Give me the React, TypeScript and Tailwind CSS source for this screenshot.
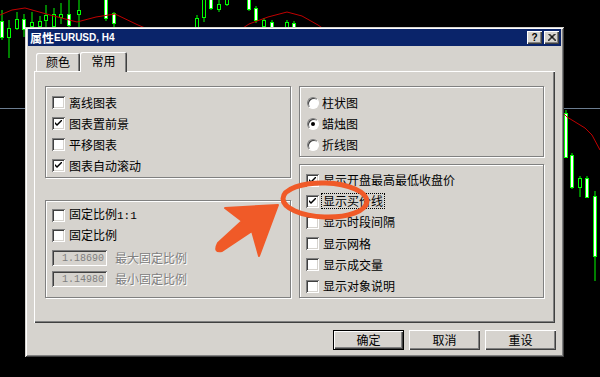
import type { ReactNode } from 'react'

type Candle = [number, number, number, number, number, boolean]

// x, bodyTop, bodyBottom, wickTop, wickBottom, white body
const candles: Candle[] = [
  [0, 21, 37, 10, 40, true],
  [7, 28, 37, 20, 58, false],
  [15, 19, 28, 12, 30, false],
  [22, 19, 29, 14, 37, true],
  [30, 22, 26, 12, 28, false],
  [38, 21, 26, 16, 27, false],
  [44, 15, 20, 5, 27, false],
  [52, 14, 26, 8, 28, false],
  [59, 14, 17, 3, 24, false],
  [67, 14, 25, 0, 27, true],
  [77, 10, 14, 0, 27, false],
  [104, -2, 18, -2, 21, true],
  [112, 13, 23, 12, 27, true],
  [195, 18, 27, 15, 30, false],
  [202, -2, 17, -2, 22, false],
  [209, -2, 8, -2, 10, true],
  [217, 4, 9, 0, 12, false],
  [225, -2, 4, -2, 6, false],
  [247, -2, 9, -2, 11, true],
  [254, 8, 20, 6, 23, true],
  [262, 20, 26, 18, 28, false],
  [270, 22, 28, 20, 28, true],
  [285, 22, 28, 20, 28, false],
  [292, 23, 28, 21, 28, true],
  [564, 113, 157, 110, 158, true],
  [570, 155, 187, 153, 189, true],
  [578, 178, 187, 176, 197, false],
  [585, 178, 197, 176, 198, true],
  [593, 196, 256, 191, 281, true],
]

function Chart() {
  return (
    <svg className="absolute inset-0" width="600" height="377" viewBox="0 0 600 377">
      <line x1="0" y1="108.5" x2="600" y2="108.5" stroke="#6b7d90" strokeWidth="1" />
      {candles.map(([x, bt, bb, wt, wb, white], i) => (
        <g key={i}>
          <line x1={x + 2} y1={wt} x2={x + 2} y2={wb} stroke="#00ff00" strokeWidth="1" />
          <rect x={x + 0.5} y={bt + 0.5} width="3" height={bb - bt} fill={white ? '#fff' : '#000'} stroke="#00ff00" strokeWidth="1" />
        </g>
      ))}
      <polyline
        points="0,15 12,10 25,8 50,15 77,22 96,17 115,14 138,25 150,30 200,40 240,30 249,24 268,17 287,12 302,16 318,25 340,40 560,110 567,117 585,128 592,135 600,150"
        fill="none"
        stroke="#c00000"
        strokeWidth="1"
      />
    </svg>
  )
}

function CheckBox({ checked }: { checked?: boolean }) {
  return (
    <div className="w-[13px] h-[13px] shrink-0 bg-white shadow-[inset_1px_1px_0_#808080,inset_-1px_-1px_0_#fff,inset_2px_2px_0_#404040,inset_-2px_-2px_0_#d6d3ce] flex items-center justify-center">
      {checked && (
        <svg width="7" height="7" viewBox="0 0 7 7">
          <path d="M0 2 L0 4 L2 6 L7 1 L7 -1 L2 4 Z" fill="#000" />
        </svg>
      )}
    </div>
  )
}

function Check({ label, checked, focus }: { label: ReactNode; checked?: boolean; focus?: boolean }) {
  return (
    <div className="flex items-center h-full">
      <CheckBox checked={checked} />
      <span className={`ml-[3px] leading-[14px] px-[1px] ${focus ? 'outline-1 outline-dotted outline-black' : ''}`}>{label}</span>
    </div>
  )
}

function Radio({ label, checked }: { label: string; checked?: boolean }) {
  return (
    <div className="flex items-center h-[21px]">
      <div className="ml-[1px] w-[12px] h-[12px] rounded-full bg-white border border-t-[#808080] border-l-[#808080] border-b-white border-r-white shadow-[inset_1px_1px_0_#404040] flex items-center justify-center">
        {checked && <div className="w-[4px] h-[4px] rounded-full bg-black" />}
      </div>
      <span className="ml-[3px] leading-[14px]">{label}</span>
    </div>
  )
}

function Field({ value, label }: { value: string; label: string }) {
  return (
    <div className="flex items-center h-[16px]">
      <div className="w-[55px] h-[16px] bg-[#d6d3ce] shadow-[inset_1px_1px_0_#808080,inset_-1px_-1px_0_#fff,inset_2px_2px_0_#404040,inset_-2px_-2px_0_#d6d3ce] flex items-center justify-end pr-[3px] font-['Liberation_Mono',monospace] text-[10px] text-[#808080]">
        {value}
      </div>
      <span className="ml-[8px] text-[#808080] [text-shadow:1px_1px_0_#fff] leading-[14px]">{label}</span>
    </div>
  )
}

function Group({ className, children }: { className: string; children: ReactNode }) {
  return (
    <div className={`border border-[#808080] shadow-[inset_1px_1px_0_#fff,1px_1px_0_#fff] px-[6px] ${className}`}>{children}</div>
  )
}

function Button({ label, isDefault }: { label: string; isDefault?: boolean }) {
  return (
    <div
      className={`w-[71px] h-[20px] flex items-center justify-center leading-none ${
        isDefault
          ? 'shadow-[inset_1px_1px_0_#000,inset_-1px_-1px_0_#000,inset_2px_2px_0_#fff,inset_-2px_-2px_0_#404040,inset_-3px_-3px_0_#808080]'
          : 'shadow-[inset_1px_1px_0_#fff,inset_-1px_-1px_0_#404040,inset_-2px_-2px_0_#808080]'
      }`}
    >
      {label}
    </div>
  )
}

function Dialog() {
  return (
    <div className="absolute left-[25px] top-[27px] w-[539px] h-[330px] bg-[#d6d3ce] p-[3px] pt-[2px] flex flex-col text-[12px] text-black font-['Noto_Sans_CJK_SC',sans-serif] shadow-[inset_1px_1px_0_#d6d3ce,inset_-1px_-1px_0_#404040,inset_2px_2px_0_#fff,inset_-2px_-2px_0_#808080]">
      <div className="h-[17px] bg-[#0a246a] flex items-center pl-[2px] pr-[2px]">
        <span className="text-white font-bold leading-none">属性</span>
        <span className="text-white font-bold text-[10px] leading-none font-['Liberation_Sans',sans-serif]">EURUSD, H4</span>
        <div className="ml-auto flex gap-[2px]">
          <div className="w-[15px] h-[13px] bg-[#d6d3ce] shadow-[inset_1px_1px_0_#fff,inset_-1px_-1px_0_#404040,inset_-2px_-2px_0_#808080] flex items-center justify-center font-['Liberation_Sans',sans-serif] font-bold text-[10px] leading-none">
            ?
          </div>
          <div className="w-[15px] h-[13px] bg-[#d6d3ce] shadow-[inset_1px_1px_0_#fff,inset_-1px_-1px_0_#404040,inset_-2px_-2px_0_#808080] flex items-center justify-center">
            <svg width="8" height="7" viewBox="0 0 8 7">
              <path d="M0.5 0 L7.5 7 M1.5 0 L8.5 7 M7.5 0 L0.5 7 M6.5 0 L-0.5 7" stroke="#000" strokeWidth="1" />
            </svg>
          </div>
        </div>
      </div>

      <div className="mt-[6px] ml-[6px] h-[19px] flex items-end">
        <div className="ml-[2px] w-[44px] h-[18px] rounded-t-[2px] shadow-[inset_1px_1px_0_#fff,inset_-1px_0_0_#404040,inset_-2px_0_0_#808080] flex items-center justify-center leading-none">
          颜色
        </div>
        <div className="relative z-10 mb-[-1px] w-[47px] h-[20px] bg-[#d6d3ce] rounded-t-[2px] shadow-[inset_1px_1px_0_#fff,inset_-1px_0_0_#404040,inset_-2px_0_0_#808080] flex items-center justify-center pb-[2px] leading-none">
          常用
        </div>
      </div>

      <div className="ml-[6px] w-[521px] h-[252px] pt-[15px] px-[11px] grid grid-cols-[246px_245px] gap-x-[8px] shadow-[inset_1px_1px_0_#fff,inset_-1px_-1px_0_#404040,inset_-2px_-2px_0_#808080]">
        <div className="flex flex-col">
          <Group className="h-[92px] pt-[5px] grid grid-rows-[21px_21px_21px_21px]">
            <Check label="离线图表" />
            <Check label="图表置前景" checked />
            <Check label="平移图表" />
            <Check label="图表自动滚动" checked />
          </Group>
          <Group className="mt-[22px] h-[98px] pt-[4px]">
            <div className="h-[20px]">
              <Check label={<>固定比例<span className="font-['Liberation_Mono',monospace] text-[11px]">1:1</span></>} />
            </div>
            <div className="h-[20px]">
              <Check label="固定比例" />
            </div>
            <div className="mt-[5px] flex flex-col gap-[5px]">
              <Field value="1.18690" label="最大固定比例" />
              <Field value="1.14980" label="最小固定比例" />
            </div>
          </Group>
        </div>
        <div className="flex flex-col">
          <Group className="h-[71px] pt-[5px]">
            <Radio label="柱状图" />
            <Radio label="蜡烛图" checked />
            <Radio label="折线图" />
          </Group>
          <Group className="mt-[7px] h-[134px] pt-[4.5px] grid grid-rows-[21.2px_21.2px_21.2px_21.2px_21.2px_21.2px]">
            <Check label="显示开盘最高最低收盘价" checked />
            <Check label="显示买价线" checked focus />
            <Check label="显示时段间隔" />
            <Check label="显示网格" />
            <Check label="显示成交量" />
            <Check label="显示对象说明" />
          </Group>
        </div>
      </div>

      <div className="mt-[7px] pr-[5px] flex justify-end gap-[5px]">
        <Button label="确定" isDefault />
        <Button label="取消" />
        <Button label="重设" />
      </div>
    </div>
  )
}

function Annotation() {
  return (
    <svg className="absolute inset-0 pointer-events-none" width="600" height="377" viewBox="0 0 600 377">
      <path
        d="M218 243 L242 221 L225 208 L278 205 L259 256 L252 231 L222 251 Q213 253 218 243 Z"
        fill="#f05a28"
        stroke="#f05a28"
        strokeWidth="2"
        strokeLinejoin="round"
      />
      <ellipse cx="325" cy="200" rx="42" ry="17" fill="none" stroke="#f05a28" strokeWidth="5" transform="rotate(2 325 200)" />
    </svg>
  )
}

export default function App() {
  return (
    <div className="relative w-[600px] h-[377px] bg-black overflow-hidden">
      <Chart />
      <Dialog />
      <Annotation />
    </div>
  )
}
